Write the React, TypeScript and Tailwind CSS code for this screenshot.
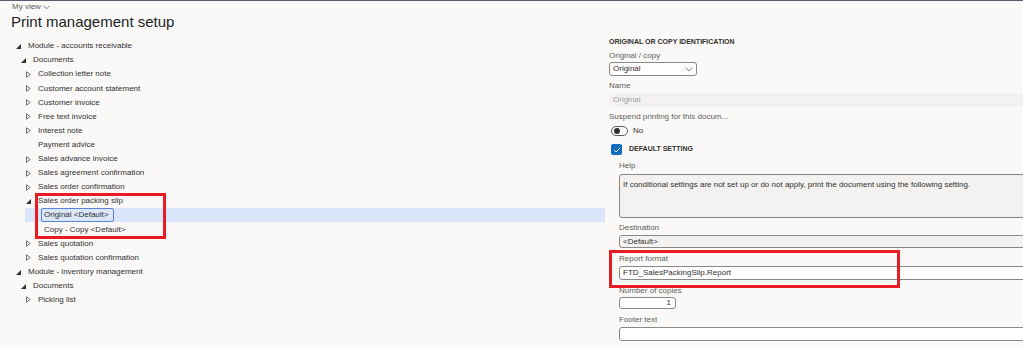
import React from "react";

type Node = {
  label: string;
  level: number;
  kind: "open" | "closed" | "none";
  selected?: boolean;
};

const tree: Node[] = [
  { label: "Module - accounts receivable", level: 0, kind: "open" },
  { label: "Documents", level: 1, kind: "open" },
  { label: "Collection letter note", level: 2, kind: "closed" },
  { label: "Customer account statement", level: 2, kind: "closed" },
  { label: "Customer invoice", level: 2, kind: "closed" },
  { label: "Free text invoice", level: 2, kind: "closed" },
  { label: "Interest note", level: 2, kind: "closed" },
  { label: "Payment advice", level: 2, kind: "none" },
  { label: "Sales advance invoice", level: 2, kind: "closed" },
  { label: "Sales agreement confirmation", level: 2, kind: "closed" },
  { label: "Sales order confirmation", level: 2, kind: "closed" },
  { label: "Sales order packing slip", level: 2, kind: "open" },
  { label: "Original <Default>", level: 3, kind: "none", selected: true },
  { label: "Copy - Copy <Default>", level: 3, kind: "none" },
  { label: "Sales quotation", level: 2, kind: "closed" },
  { label: "Sales quotation confirmation", level: 2, kind: "closed" },
  { label: "Module - inventory management", level: 0, kind: "open" },
  { label: "Documents", level: 1, kind: "open" },
  { label: "Picking list", level: 2, kind: "closed" },
];

const indent = ["pl-[16px]", "pl-[21px]", "pl-[26px]", "pl-[16px]"];

function Expander({ kind }: { kind: Node["kind"] }) {
  if (kind === "open") {
    return (
      <svg width="5" height="5" viewBox="0 0 5 5" className="mt-[1px]">
        <path d="M5 0 L5 5 L0 5 Z" fill="#323130" />
      </svg>
    );
  }
  if (kind === "closed") {
    return (
      <svg width="5" height="7" viewBox="0 0 5 7">
        <path d="M0.5 0.8 L4.2 3.5 L0.5 6.2 Z" fill="none" stroke="#605e5c" strokeWidth="0.9" />
      </svg>
    );
  }
  return null;
}

function TreeRow({ node }: { node: Node }) {
  if (node.level === 3) {
    return (
      <div
        className={`flex h-[14.1px] items-center ml-[25px] pl-[16px] ${
          node.selected ? "bg-[#dbe6fb]" : ""
        }`}
      >
        <span
          className={`pl-[2px] pr-[5px] leading-[12px] rounded-[2px] border ${
            node.selected ? "border-[#5b84d9]" : "border-transparent"
          }`}
        >
          {node.label}
        </span>
      </div>
    );
  }
  return (
    <div className={`flex h-[14.1px] items-center ${indent[node.level]}`}>
      <div className="w-[12px] flex items-center">
        <Expander kind={node.kind} />
      </div>
      <span className="leading-[12px]">{node.label}</span>
    </div>
  );
}

function Label({ children, className = "" }: { children: React.ReactNode; className?: string }) {
  return <div className={`h-[10px] leading-[10px] text-[8px] text-[#605e5c] ${className}`}>{children}</div>;
}

export default function App() {
  return (
    <div
      className="relative w-[1023px] h-[347px] overflow-hidden bg-[#faf9f8] text-[8px] text-[#323130]"
      style={{ fontFamily: '"Liberation Sans", Arial, sans-serif' }}
    >
      <div className="h-px bg-[#535d6e]" />
      <div className="pl-[12px]">
        <div className="mt-[1px] h-[10px] leading-[10px] text-[8px] text-[#605e5c] flex items-center gap-[2px]">
          <span>My view</span>
          <svg width="7" height="5" viewBox="0 0 7 5">
            <path d="M0.5 0.8 L3.5 3.8 L6.5 0.8" fill="none" stroke="#605e5c" strokeWidth="0.8" />
          </svg>
        </div>
      </div>
      <div className="pl-[11px] h-[20px] leading-[20px] text-[15px] text-[#201f1e]">Print management setup</div>

      <div className="flex">
        <div className="w-[605px] pt-[7.25px] shrink-0">
          {tree.map((n, i) => (
            <TreeRow key={i} node={n} />
          ))}
        </div>

        <div className="ml-[4px] -mr-[10px] flex-1 flex flex-col">
          <div className="mt-[4.5px] h-[10px] leading-[10px] text-[7px] font-bold text-[#323130]">
            ORIGINAL OR COPY IDENTIFICATION
          </div>
          <Label className="mt-[4.5px]">Original / copy</Label>
          <div className="mt-[1px] w-[88px] h-[14px] bg-white border border-[#8a8886] rounded-[3px] flex items-center justify-between pl-[3px] pr-[3px]">
            <span>Original</span>
            <svg width="8" height="5" viewBox="0 0 8 5">
              <path d="M0.5 0.8 L4 4 L7.5 0.8" fill="none" stroke="#605e5c" strokeWidth="0.8" />
            </svg>
          </div>
          <Label className="mt-[5px]">Name</Label>
          <div className="mt-[2px] h-[14px] bg-[#f3f2f1] rounded-[2px] flex items-center pl-[4px] text-[#a19f9d]">
            Original
          </div>
          <Label className="mt-[5px]">Suspend printing for this docum...</Label>
          <div className="mt-[3px] h-[11px] flex items-center pl-[2px]">
            <div className="w-[17px] h-[10px] rounded-full border border-[#605e5c] flex items-center pl-[2px]">
              <div className="w-[6px] h-[6px] rounded-full bg-[#323130]" />
            </div>
            <span className="ml-[5px]">No</span>
          </div>
          <div className="mt-[8px] h-[11px] flex items-center pl-[2px]">
            <div className="w-[11px] h-[11px] rounded-[2px] bg-[#0f6cbd] flex items-center justify-center">
              <svg width="8" height="6" viewBox="0 0 8 6">
                <path d="M1 3 L3 5 L7 1" fill="none" stroke="white" strokeWidth="0.9" />
              </svg>
            </div>
            <span className="ml-[7px] text-[7px] font-bold">DEFAULT SETTING</span>
          </div>

          <div className="pl-[10px] flex flex-col">
            <Label className="mt-[6px]">Help</Label>
            <div className="mt-[3px] h-[44px] bg-[#f3f2f1] border border-[#8a8886] rounded-[3px] pl-[3px] pt-[5px] leading-[10px]">
              If conditional settings are not set up or do not apply, print the document using the following setting.
            </div>
            <Label className="mt-[5px]">Destination</Label>
            <div className="mt-[2px] h-[13px] bg-[#f3f2f1] border border-[#8a8886] rounded-[3px] flex items-center pl-[3px]">
              &lt;Default&gt;
            </div>
            <Label className="mt-[6px]">Report format</Label>
            <div className="mt-[2px] h-[14px] bg-white border border-[#8a8886] rounded-[3px] flex items-center pl-[3px]">
              FTD_SalesPackingSlip.Report
            </div>
            <Label className="mt-[6px]">Number of copies</Label>
            <div className="mt-[1px] w-[57px] h-[12px] bg-white border border-[#8a8886] rounded-[3px] flex items-center justify-end pr-[4px]">
              1
            </div>
            <Label className="mt-[6px]">Footer text</Label>
            <div className="mt-[2px] h-[14px] bg-white border border-[#8a8886] rounded-[3px]" />
          </div>
        </div>
      </div>

      <div className="absolute left-[35px] top-[193px] w-[131px] h-[46px] border-[3px] border-[#e81c24]" />
      <div className="absolute left-[609px] top-[250px] w-[291px] h-[38px] border-[3px] border-[#e81c24]" />
    </div>
  );
}
